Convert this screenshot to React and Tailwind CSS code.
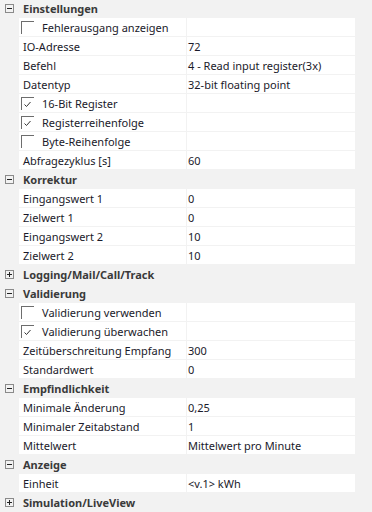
const sections = [
  {
    title: 'Einstellungen',
    open: true,
    rows: [
      { check: false, name: 'Fehlerausgang anzeigen' },
      { name: 'IO-Adresse', value: '72' },
      { name: 'Befehl', value: '4 - Read input register(3x)' },
      { name: 'Datentyp', value: '32-bit floating point' },
      { check: true, name: '16-Bit Register' },
      { check: true, name: 'Registerreihenfolge' },
      { check: false, name: 'Byte-Reihenfolge' },
      { name: 'Abfragezyklus [s]', value: '60' }
    ]
  },
  {
    title: 'Korrektur',
    open: true,
    rows: [
      { name: 'Eingangswert 1', value: '0' },
      { name: 'Zielwert 1', value: '0' },
      { name: 'Eingangswert 2', value: '10' },
      { name: 'Zielwert 2', value: '10' }
    ]
  },
  { title: 'Logging/Mail/Call/Track', open: false, rows: [] },
  {
    title: 'Validierung',
    open: true,
    rows: [
      { check: false, name: 'Validierung verwenden' },
      { check: true, name: 'Validierung überwachen' },
      { name: 'Zeitüberschreitung Empfang', value: '300' },
      { name: 'Standardwert', value: '0' }
    ]
  },
  {
    title: 'Empfindlichkeit',
    open: true,
    rows: [
      { name: 'Minimale Änderung', value: '0,25' },
      { name: 'Minimaler Zeitabstand', value: '1' },
      { name: 'Mittelwert', value: 'Mittelwert pro Minute' }
    ]
  },
  {
    title: 'Anzeige',
    open: true,
    rows: [{ name: 'Einheit', value: '<v.1> kWh' }]
  },
  { title: 'Simulation/LiveView', open: false, rows: [] }
];

const ToggleBox = ({ open }) => (
  <svg width="9" height="9" viewBox="0 0 9 9" className="block">
    <rect x="0.5" y="0.5" width="8" height="8" fill="none" stroke="#8a8a8a" />
    <path d="M2 4.5h5" stroke="#222" />
    {!open && <path d="M4.5 2v5" stroke="#222" />}
  </svg>
);

const CheckBox = ({ checked }) => (
  <div className="w-[13px] h-[13px] border-l border-t border-[#6d6d6d] flex items-center justify-center shrink-0">
    {checked && (
      <svg width="9" height="9" viewBox="0 0 9 9" className="block -ml-[2px]">
        <path d="M1.5 4.5l2 2 4-4.5" fill="none" stroke="#333" strokeWidth="1" />
      </svg>
    )}
  </div>
);

const Header = ({ title, open, first }) => (
  <div className={`${first ? 'h-[18px]' : 'h-[19px]'} flex items-center pb-px`}>
    <div className="w-[23px] pl-[5px]">
      <ToggleBox open={open} />
    </div>
    <span className="font-bold text-[#3a3a3a]">{title}</span>
  </div>
);

const Row = ({ row }) => (
  <div className="h-[19px] flex pl-[19px] pr-[17px] pb-px">
    <div className="w-[167px] bg-white flex items-center overflow-hidden whitespace-nowrap">
      {row.check !== undefined ? (
        <>
          <div className="pl-[2px] pr-[8px] pt-px">
            <CheckBox checked={row.check} />
          </div>
          <span>{row.name}</span>
        </>
      ) : (
        <span className="pl-[4px]">{row.name}</span>
      )}
    </div>
    <div className="w-px" />
    <div className="flex-1 bg-white flex items-center whitespace-nowrap overflow-hidden">
      {row.value !== undefined && <span className="pl-px">{row.value}</span>}
    </div>
  </div>
);

export default function App() {
  return (
    <div
      className="w-[372px] h-[512px] bg-[#f2f2f2] overflow-hidden text-[11px] leading-none text-[#1a1a2a]"
      style={{ fontFamily: '"Noto Sans", "Open Sans", sans-serif' }}
    >
      {sections.map((s, i) => (
        <div key={i}>
          <Header title={s.title} open={s.open} first={i === 0} />
          {s.rows.map((r, j) => (
            <Row key={j} row={r} />
          ))}
        </div>
      ))}
    </div>
  );
}
